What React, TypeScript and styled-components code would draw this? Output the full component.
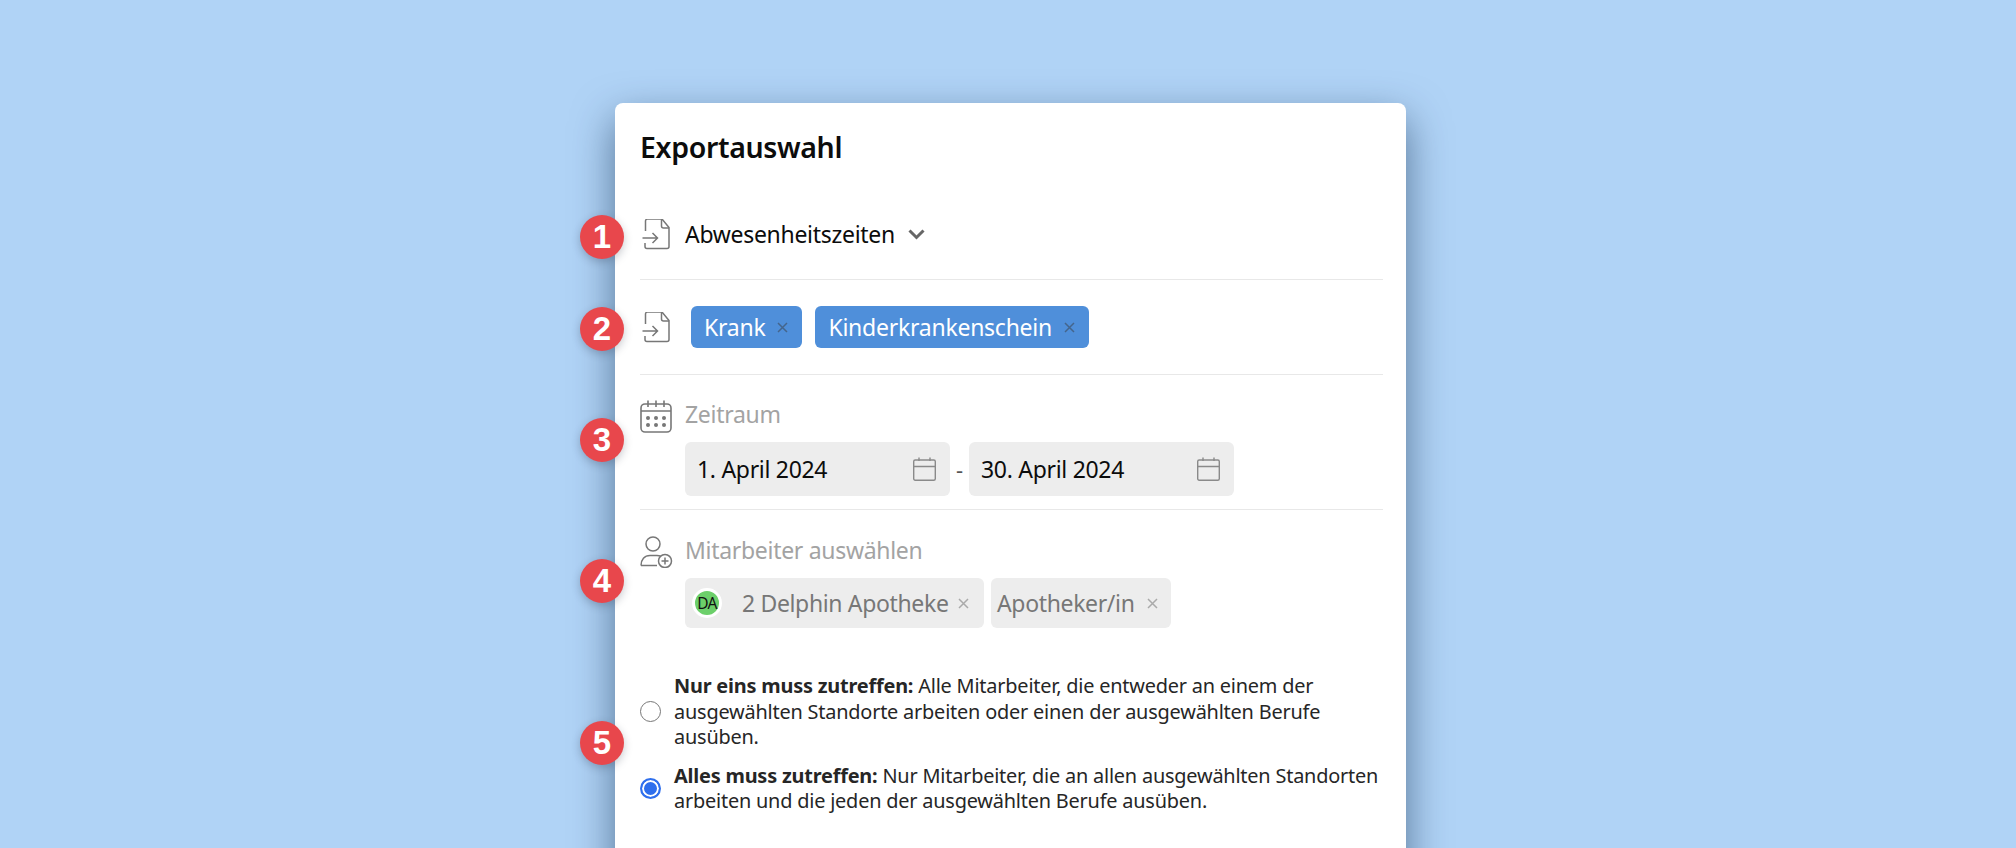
import React, { FC } from 'react';
import styled, { createGlobalStyle } from 'styled-components';

const GlobalStyle = createGlobalStyle`
  html, body {
    margin: 0;
    padding: 0;
    background: #b0d3f6;
  }
  body {
    font-family: "Noto Sans", "Open Sans", sans-serif;
  }
`;

const Page = styled.div`
  width: 2016px;
  height: 848px;
  overflow: hidden;
  padding: 103px 0 0 615px;
  box-sizing: border-box;
  background: #b0d3f6;
`;

const Card = styled.div`
  width: 791px;
  height: 800px;
  box-sizing: border-box;
  padding: 0 23px 0 25px;
  background: #fff;
  border-radius: 8px;
  box-shadow: 0 16px 42px rgba(22, 50, 84, 0.6);
`;

const Title = styled.h1`
  margin: 0;
  box-sizing: border-box;
  padding-top: 26px;
  height: 67px;
  font-size: 28.5px;
  line-height: 36px;
  font-weight: 600;
  color: #0c0c0c;
  letter-spacing: -0.35px;
`;

const Section = styled.div<{ $height: number; $pad: number; $last?: boolean }>`
  position: relative;
  height: ${p => p.$height}px;
  box-sizing: border-box;
  padding-top: ${p => p.$pad}px;
  border-bottom: ${p => (p.$last ? 'none' : '1px solid #e8e8e8')};
`;

const Badge = styled.div<{ $top: number }>`
  position: absolute;
  left: -60px;
  top: ${p => p.$top}px;
  width: 44px;
  height: 44px;
  border-radius: 50%;
  background: #e8474c;
  color: #fff;
  font-family: "Liberation Sans", Arial, sans-serif;
  font-weight: 700;
  font-size: 33px;
  line-height: 44px;
  text-align: center;
  box-shadow: 0 3px 8px rgba(30, 40, 60, 0.25);
`;

const Row = styled.div`
  display: flex;
  align-items: center;
`;

const LabelRow = styled.div`
  display: flex;
  align-items: flex-start;
`;

const IconSlot = styled.div`
  display: flex;
  width: 45px;
  flex: none;
  svg {
    display: block;
  }
`;

const SelectText = styled.span`
  font-size: 23px;
  line-height: 32px;
  color: #0c0c0c;
  letter-spacing: -0.3px;
`;

const Chevron = styled.svg`
  margin-left: 13px;
`;

const TagList = styled.div`
  display: flex;
  gap: 13px;
  margin-left: 6px;
`;

const Tag = styled.div`
  display: flex;
  align-items: center;
  height: 42px;
  padding: 0 14px 0 13px;
  border-radius: 6px;
  background: #4f8fda;
  color: #fff;
  font-size: 23px;
  letter-spacing: -0.25px;
`;

const Cross = styled.svg<{ $gap: number }>`
  margin-left: ${p => p.$gap}px;
  flex: none;
`;

const FieldLabel = styled.div`
  margin-top: -2px;
  font-size: 23px;
  line-height: 32px;
  color: #a3a3a3;
  letter-spacing: -0.3px;
`;

const Fields = styled.div`
  display: flex;
  align-items: center;
  margin: 9px 0 0 45px;
`;

const DateField = styled.div<{ $width: number }>`
  display: flex;
  align-items: center;
  justify-content: space-between;
  width: ${p => p.$width}px;
  height: 54px;
  box-sizing: border-box;
  padding: 0 14px 0 12px;
  border-radius: 6px;
  background: #ededed;
  font-size: 23px;
  color: #0c0c0c;
  letter-spacing: -0.3px;
`;

const Dash = styled.span`
  width: 19px;
  text-align: center;
  font-size: 22px;
  color: #555;
`;

const GreyTags = styled.div`
  display: flex;
  gap: 7px;
  margin: 10px 0 0 45px;
`;

const GreyTag = styled.div<{ $width: number; $pad: number }>`
  display: flex;
  align-items: center;
  width: ${p => p.$width}px;
  height: 50px;
  box-sizing: border-box;
  padding-left: ${p => p.$pad}px;
  border-radius: 6px;
  background: #ededed;
  color: #777;
  font-size: 23px;
  letter-spacing: -0.35px;
`;

const Avatar = styled.div`
  width: 30px;
  height: 30px;
  margin-right: 20px;
  box-sizing: border-box;
  border: 3px solid #fff;
  border-radius: 50%;
  background: #6ccf6a;
  color: #111;
  font-size: 15.5px;
  line-height: 24px;
  text-align: center;
  letter-spacing: -0.8px;
  flex: none;
`;

const RadioRow = styled.div<{ $top: number }>`
  display: flex;
  align-items: center;
  margin-top: ${p => p.$top}px;
`;

const Radio = styled.span<{ $checked?: boolean }>`
  width: 21px;
  height: 21px;
  margin-right: 13px;
  box-sizing: border-box;
  flex: none;
  border-radius: 50%;
  border: ${p => (p.$checked ? '2px solid #2f6fed' : '1.5px solid #777')};
  background: ${p => (p.$checked ? '#2f6fed' : '#fff')};
  box-shadow: ${p => (p.$checked ? 'inset 0 0 0 2px #fff' : 'none')};
`;

const RadioText = styled.div`
  font-size: 19.9px;
  line-height: 25.5px;
  color: #262626;
  white-space: nowrap;
  letter-spacing: -0.2px;
  b {
    font-weight: 700;
  }
`;

const FileIcon: FC = () => (
  <svg width="28" height="31" viewBox="0 1 28 31" fill="none" stroke="#777" strokeWidth="1.5" style={{ marginLeft: 2 }}>
    <path d="M3.5 13V3a2 2 0 0 1 2-2H20l7 8.5v19a2 2 0 0 1-2 2H5a2 2 0 0 1-2-2V25" />
    <path d="M19.5 1v7a2 2 0 0 0 2 2H27" />
    <path d="M0.5 20h15M10.5 15l5 5-5 5" />
  </svg>
);

const CalendarIcon: FC = () => (
  <svg width="32" height="33" viewBox="0 0 32 33" fill="none" stroke="#777" strokeWidth="1.6">
    <rect x="1" y="4" width="30" height="28" rx="4" />
    <path d="M1 11h30M8 0.5V7M16 0.5V7M24 0.5V7" />
    {[8, 16, 24].map(x =>
      [18, 25].map(y => <circle key={`${x}-${y}`} cx={x} cy={y} r="2" fill="#777" stroke="none" />)
    )}
  </svg>
);

const PersonIcon: FC = () => (
  <svg width="33" height="32" viewBox="0 0 33 32" fill="none" stroke="#777" strokeWidth="1.5">
    <circle cx="13" cy="8" r="7" />
    <path d="M1 29.5c0-6 3.5-10 9-10h7c1.5 0 2.6 0.2 3.6 0.6M1 29.5h16" />
    <circle cx="25" cy="25" r="6.5" fill="#fff" />
    <path d="M25 21.5v7M21.5 25h7" />
  </svg>
);

const SmallCalendar: FC = () => (
  <svg width="23" height="24" viewBox="0 0 23 24" fill="none" stroke="#8a8a8a" strokeWidth="1.4">
    <rect x="0.7" y="3" width="21.6" height="20.3" rx="1.5" />
    <path d="M0.7 9.5h21.6M6 0.5V4M17 0.5V4" />
  </svg>
);

const CrossIcon: FC<{ color: string; gap?: number }> = ({ color, gap = 12 }) => (
  <Cross $gap={gap} width="11" height="11" viewBox="0 0 11 11" stroke={color} strokeWidth="1.5">
    <path d="M1 1l9 9M10 1l-9 9" />
  </Cross>
);

const App: FC = () => (
  <>
    <GlobalStyle />
    <Page>
      <Card>
        <Title>Exportauswahl</Title>

        <Section $height={110} $pad={48}>
          <Badge $top={45}>1</Badge>
          <Row>
            <IconSlot><FileIcon /></IconSlot>
            <SelectText>Abwesenheitszeiten</SelectText>
            <Chevron width="17" height="11" viewBox="0 0 17 11" fill="none" stroke="#666" strokeWidth="3">
              <path d="M1.5 1.5l7 7 7-7" />
            </Chevron>
          </Row>
        </Section>

        <Section $height={95} $pad={26}>
          <Badge $top={27}>2</Badge>
          <Row>
            <IconSlot><FileIcon /></IconSlot>
            <TagList>
              <Tag>Krank<CrossIcon color="#44658c" /></Tag>
              <Tag>Kinderkrankenschein<CrossIcon color="#44658c" /></Tag>
            </TagList>
          </Row>
        </Section>

        <Section $height={135} $pad={25}>
          <Badge $top={43}>3</Badge>
          <LabelRow>
            <IconSlot><CalendarIcon /></IconSlot>
            <FieldLabel>Zeitraum</FieldLabel>
          </LabelRow>
          <Fields>
            <DateField $width={265}>1. April 2024<SmallCalendar /></DateField>
            <Dash>-</Dash>
            <DateField $width={265}>30. April 2024<SmallCalendar /></DateField>
          </Fields>
        </Section>

        <Section $height={300} $pad={26} $last>
          <Badge $top={49}>4</Badge>
          <LabelRow>
            <IconSlot><PersonIcon /></IconSlot>
            <FieldLabel>Mitarbeiter auswählen</FieldLabel>
          </LabelRow>
          <GreyTags>
            <GreyTag $width={299} $pad={7}>
              <Avatar>DA</Avatar>
              2 Delphin Apotheke
              <CrossIcon color="#aaa" gap={9} />
            </GreyTag>
            <GreyTag $width={180} $pad={6}>
              Apotheker/in
              <CrossIcon color="#aaa" />
            </GreyTag>
          </GreyTags>

          <Badge $top={211}>5</Badge>
          <RadioRow $top={45}>
            <Radio />
            <RadioText>
              <b>Nur eins muss zutreffen:</b> Alle Mitarbeiter, die entweder an einem der<br />
              ausgewählten Standorte arbeiten oder einen der ausgewählten Berufe<br />
              ausüben.
            </RadioText>
          </RadioRow>
          <RadioRow $top={13}>
            <Radio $checked />
            <RadioText>
              <b>Alles muss zutreffen:</b> Nur Mitarbeiter, die an allen ausgewählten Standorten<br />
              arbeiten und die jeden der ausgewählten Berufe ausüben.
            </RadioText>
          </RadioRow>
        </Section>
      </Card>
    </Page>
  </>
);

export default App;
